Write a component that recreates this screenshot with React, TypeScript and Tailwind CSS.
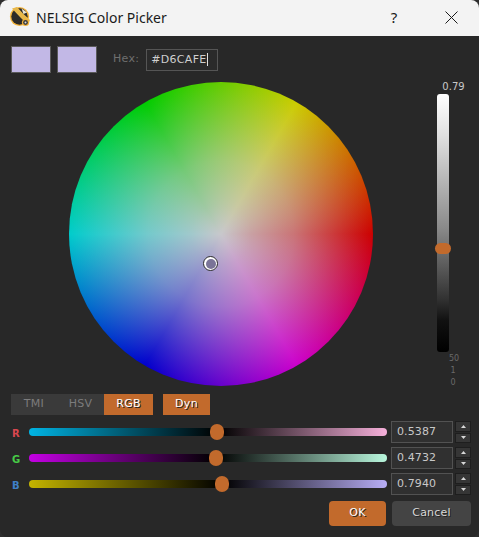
import React from "react";

const body = "font-['DejaVu_Sans',sans-serif]";

function Logo() {
  return (
    <svg width="22" height="22" viewBox="0 0 22 22" className="shrink-0">
      <circle cx="10.5" cy="10.5" r="9.6" fill="#f3b33a" />
      <circle cx="10.5" cy="10.5" r="8.2" fill="#2c2a28" />
      <path d="M3 2.5 L10.5 10.5 L19 19 L21 14 L14 7.5 L8 1 Z" fill="#e8b84a" />
      <path d="M12.5 2.5 L14.5 8 L18 6.5 Z" fill="#e9e4d4" />
      <circle cx="16.5" cy="16.5" r="3.6" fill="#f3b33a" />
      <circle cx="16.5" cy="16.5" r="2.4" fill="#3b3b3b" />
      <circle cx="16.5" cy="16.5" r="1" fill="#d8d8d8" />
    </svg>
  );
}

function Spin({ value }: { value: string }) {
  return (
    <div className="flex gap-[2px] h-[22px]">
      <div className={`w-[62px] h-full border border-[#525252] bg-[#303030] text-[#c8c8c8] text-[11px] leading-[20px] pl-[5px] tracking-[0.1px] ${body}`}>
        {value}
      </div>
      <div className="w-[16px] h-full flex flex-col gap-[1px]">
        <div className="flex-1 bg-[#363636] border border-[#1e1e1e] flex items-center justify-center">
          <svg width="5" height="3" viewBox="0 0 5 3"><path d="M2.5 0 L5 3 H0 Z" fill="#d8d8d8" /></svg>
        </div>
        <div className="flex-1 bg-[#363636] border border-[#1e1e1e] flex items-center justify-center">
          <svg width="5" height="3" viewBox="0 0 5 3"><path d="M0 0 H5 L2.5 3 Z" fill="#d8d8d8" /></svg>
        </div>
      </div>
    </div>
  );
}

function Row({ label, color, track, thumb, value }: { label: string; color: string; track: string; thumb: number; value: string }) {
  return (
    <div className="flex items-center h-[22px]">
      <div className={`w-[18px] pl-[1px] text-[10px] font-bold pt-[3px] ${color} ${body}`}>{label}</div>
      <div className={`relative w-[358px] h-[8px] rounded-full ${track}`}>
        <div className="absolute top-[-4px] w-[14px] h-[16px] rounded-full bg-[#c26a2c]" style={{ left: thumb - 7 }} />
      </div>
      <div className="ml-[4px]">
        <Spin value={value} />
      </div>
    </div>
  );
}

export default function App() {
  return (
    <div className="w-[479px] h-[537px] bg-[#2e2e2e] overflow-hidden">
      <div className="h-full rounded-[8px] overflow-hidden bg-[#282828] flex flex-col">
        <div className="h-[36px] shrink-0 bg-[#f3f3f3] flex items-center pl-[9px] pb-[2px] text-[#1a1a1a]">
          <Logo />
          <span className="ml-[5px] text-[14px] font-['Noto_Sans',sans-serif]">NELSIG Color Picker</span>
          <span className="ml-[224px] text-[15px] font-['Noto_Sans',sans-serif] w-[10px]">?</span>
          <svg width="13" height="13" viewBox="0 0 13 13" className="ml-[44px]">
            <path d="M0.5 0.5 L12.5 12.5 M12.5 0.5 L0.5 12.5" stroke="#1a1a1a" strokeWidth="1" />
          </svg>
        </div>

        <div className="flex-1 pt-[10px] pl-[11px] pr-[8px]">
          <div className="flex items-center h-[27px]">
            <div className="w-[40px] h-full bg-[#c2b8e6] border border-[#5a5a5a]" />
            <div className="ml-[6px] w-[40px] h-full bg-[#c2b8e6] border border-[#5a5a5a]" />
            <span className={`ml-[16px] text-[11px] tracking-[0.3px] text-[#6f6f6f] ${body}`}>Hex:</span>
            <div className={`ml-[7px] w-[72px] h-[22px] border border-[#555555] bg-[#2a2a2a] text-[#cfcfcf] text-[11px] tracking-[0.3px] leading-[20px] pl-[4px] flex items-center ${body}`}>
              #D6CAFE<span className="w-[1px] h-[13px] bg-[#e0e0e0]" />
            </div>
          </div>

          <div className="flex mt-[9px] h-[304px]">
            <div className="relative shrink-0 ml-[58px] w-[304px] h-[304px] rounded-full bg-[radial-gradient(circle_closest-side,rgba(200,200,204,1)_0%,rgba(200,200,204,0.8)_20%,rgba(200,200,204,0.58)_48%,rgba(200,200,204,0)_100%),conic-gradient(from_90deg,#cc0000_0deg,#cc00cc_60deg,#0000cc_120deg,#00cccc_180deg,#00cc00_240deg,#cccc00_300deg,#cc0000_360deg)]">
              <div className="absolute left-[134px] top-[174px] w-[15px] h-[15px] rounded-full border border-[#2a2a2a] bg-white p-[1.5px]">
                <div className="w-full h-full rounded-full bg-[#7a7498]" />
              </div>
            </div>

            <div className="ml-[50px] w-[42px] shrink-0 flex flex-col -mt-[1px]">
              <div className={`ml-[19px] w-[23px] h-[12px] leading-[12px] text-center text-[10px] text-[#c8c8c8] ${body}`}>0.79</div>
              <div className="relative shrink-0 ml-[14px] mt-[1px] w-[12px] h-[258px] rounded-[3px] bg-[linear-gradient(to_bottom,#ffffff_0%,#e0e0e0_16%,#8a8a8a_52%,#303030_80%,#101010_88%,#000000_100%)]">
                <div className="absolute left-[-2px] top-[149px] w-[16px] h-[11px] rounded-full bg-[#c26a2c]" />
              </div>
              <div className={`ml-[26px] w-[8px] mt-[1px] flex flex-col text-center text-[8px] leading-[12px] text-[#6a6a6a] ${body}`}>
                <span>50</span>
                <span>1</span>
                <span>0</span>
              </div>
            </div>
          </div>

          <div className={`flex mt-[8px] h-[21px] text-[11px] tracking-[0.3px] ${body}`}>
            <div className="flex bg-[#3a3a3a] text-[#7c7c7c]">
              <div className="w-[46px] flex items-center justify-center">TMI</div>
              <div className="w-[47px] flex items-center justify-center">HSV</div>
              <div className="w-[49px] flex items-center justify-center bg-[#c26a2c] text-white [text-shadow:1px_1px_0_#222]">RGB</div>
            </div>
            <div className="ml-[10px] w-[47px] flex items-center justify-center bg-[#c26a2c] text-white [text-shadow:1px_1px_0_#222]">Dyn</div>
          </div>

          <div className="mt-[6px] flex flex-col gap-[4px]">
            <Row label="R" color="text-[#d9474f]" value="0.5387" thumb={188} track="bg-[linear-gradient(to_right,#00b4e4_0%,#000000_52.5%,#000000_53%,#f6b0da_100%)]" />
            <Row label="G" color="text-[#46cc46]" value="0.4732" thumb={187} track="bg-[linear-gradient(to_right,#c400e4_0%,#000000_52%,#b8f6dc_100%)]" />
            <Row label="B" color="text-[#3f80c8]" value="0.7940" thumb={193} track="bg-[linear-gradient(to_right,#c4b400_0%,#000000_54%,#b8aef6_100%)]" />
          </div>

          <div className={`mt-[6px] flex justify-end gap-[6px] text-[11px] tracking-[0.2px] ${body}`}>
            <div className="w-[57px] h-[25px] rounded-[4px] bg-[#c26a2c] text-white flex items-center justify-center [text-shadow:1px_1px_0_#222]">OK</div>
            <div className="w-[79px] h-[25px] rounded-[4px] bg-[#444444] text-[#d8d8d8] flex items-center justify-center [text-shadow:1px_1px_0_#222]">Cancel</div>
          </div>
        </div>
      </div>
    </div>
  );
}
